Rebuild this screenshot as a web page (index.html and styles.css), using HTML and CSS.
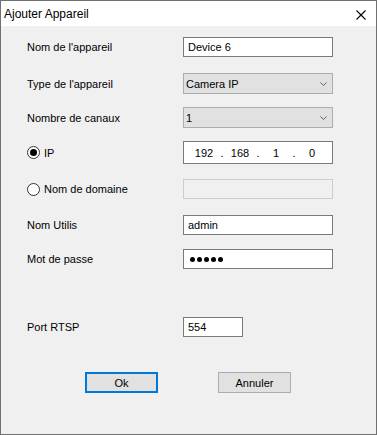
FILE: index.html
```html
<!DOCTYPE html>
<html lang="fr">
<head>
    <meta charset="UTF-8">
    <title>Ajouter Appareil</title>
    <link rel="stylesheet" href="styles.css">
</head>
<body>

<div class="window">
    <div class="titlebar">
        <span class="title">Ajouter Appareil</span>
        <svg class="close" width="10" height="10" viewBox="0 0 10 10">
            <path d="M0.5 0.5 L9.5 9.5 M9.5 0.5 L0.5 9.5" stroke="#000" stroke-width="1.1" fill="none"/>
        </svg>
    </div>

    <div class="form">
        <div class="row r1">
            <span class="label">Nom de l'appareil</span>
            <div class="field">Device 6</div>
        </div>
        <div class="row r2">
            <span class="label">Type de l'appareil</span>
            <div class="combo">
                <span>Camera IP</span>
                <svg width="7" height="4" viewBox="0 0 7 4"><path d="M0.5 0.5 L3.5 3.5 L6.5 0.5" stroke="#606060" fill="none"/></svg>
            </div>
        </div>
        <div class="row r3">
            <span class="label">Nombre de canaux</span>
            <div class="combo">
                <span>1</span>
                <svg width="7" height="4" viewBox="0 0 7 4"><path d="M0.5 0.5 L3.5 3.5 L6.5 0.5" stroke="#606060" fill="none"/></svg>
            </div>
        </div>
        <div class="row r4">
            <span class="label radio-label"><span class="radio checked"></span>IP</span>
            <div class="field ip">
                <span class="seg">192</span><span class="dot">.</span>
                <span class="seg">168</span><span class="dot">.</span>
                <span class="seg">1</span><span class="dot">.</span>
                <span class="seg">0</span>
            </div>
        </div>
        <div class="row r5">
            <span class="label radio-label"><span class="radio"></span>Nom de domaine</span>
            <div class="field disabled"></div>
        </div>
        <div class="row r6">
            <span class="label">Nom Utilis</span>
            <div class="field">admin</div>
        </div>
        <div class="row r7">
            <span class="label">Mot de passe</span>
            <div class="field password">
                <i></i><i></i><i></i><i></i><i></i>
            </div>
        </div>
        <div class="row r8">
            <span class="label">Port RTSP</span>
            <div class="field port">554</div>
        </div>

        <div class="buttons">
            <div class="btn default">Ok</div>
            <div class="btn">Annuler</div>
        </div>
    </div>
</div>

</body>
</html>
```

FILE: styles.css
```css
html, body {
    margin: 0;
    padding: 0;
    background: #f0f0f0;
}

.window {
    width: 377px;
    height: 435px;
    box-sizing: border-box;
    border: 1px solid #707070;
    background-color: #f0f0f0;
    font-family: "Liberation Sans", Arial, sans-serif;
    font-size: 11px;
    color: #000;
}

.titlebar {
    height: 25px;
    background-color: #fff;
    display: flex;
    align-items: center;
    justify-content: space-between;
    padding: 0 10px 0 3px;
}
.title {
    font-size: 12px;
}
.close {
    display: block;
    margin-top: 2px;
}

.form {
    padding: 11px 0 0 26px;
}

.row {
    display: flex;
    align-items: center;
}
.r2 { margin-top: 16px; }
.r3 { margin-top: 13px; }
.r4 { margin-top: 13px; }
.r5 { margin-top: 15px; }
.r6 { margin-top: 16px; }
.r7 { margin-top: 14px; }
.r8 { margin-top: 48px; }

.label {
    width: 156px;
    flex: none;
}
.radio-label {
    display: flex;
    align-items: center;
}
.radio {
    width: 11px;
    height: 11px;
    border: 1px solid #333;
    border-radius: 50%;
    background: #fff;
    margin-right: 4px;
    position: relative;
    box-sizing: content-box;
}
.radio.checked::after {
    content: "";
    position: absolute;
    left: 2px;
    top: 2px;
    width: 7px;
    height: 7px;
    border-radius: 50%;
    background: #000;
}

.field {
    width: 150px;
    height: 20px;
    box-sizing: border-box;
    border: 1px solid #7a7a7a;
    background: #fff;
    padding: 0 4px;
    display: flex;
    align-items: center;
}
.field.disabled {
    border-color: #cccccc;
    background: #f0f0f0;
}
.field.port {
    width: 60px;
}
.field.ip {
    height: 23px;
    padding: 0 0 0 6px;
}
.ip .seg {
    width: 28px;
    text-align: center;
}
.ip .dot {
    width: 8px;
    text-align: center;
}
.password {
    gap: 2px;
    padding-left: 6px;
}
.password i {
    width: 5px;
    height: 5px;
    border-radius: 50%;
    background: #000;
}

.combo {
    width: 150px;
    height: 21px;
    box-sizing: border-box;
    border: 1px solid #adadad;
    background: #e1e1e1;
    padding: 0 5px 0 2px;
    display: flex;
    align-items: center;
    justify-content: space-between;
}
.combo svg {
    display: block;
}

.buttons {
    display: flex;
    gap: 60px;
    margin-top: 35px;
    padding-left: 58px;
}
.btn {
    width: 73px;
    height: 21px;
    box-sizing: border-box;
    border: 1px solid #adadad;
    background: #e1e1e1;
    display: flex;
    align-items: center;
    justify-content: center;
}
.btn.default {
    border: 2px solid #0078d7;
}
```
